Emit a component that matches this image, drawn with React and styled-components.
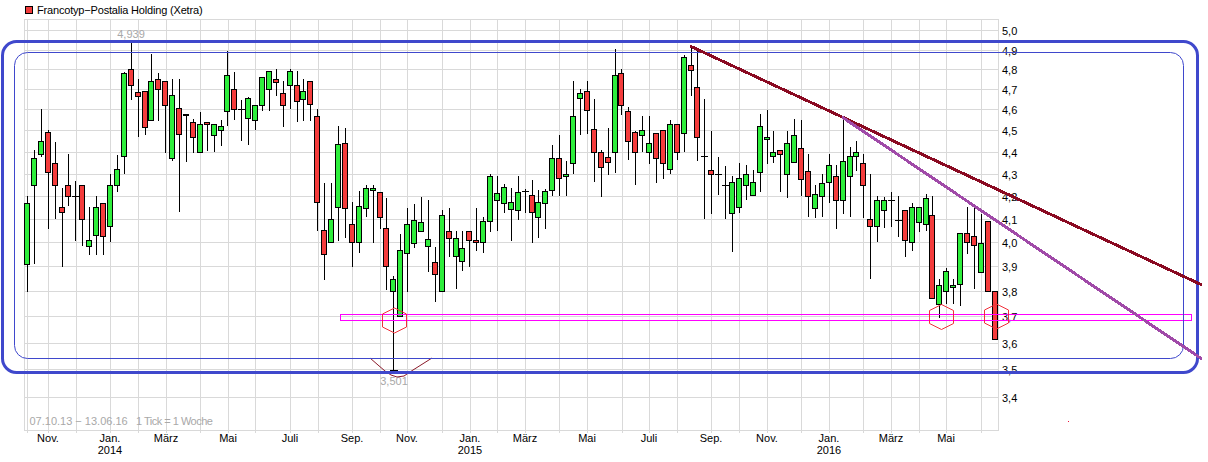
import styled, { createGlobalStyle } from 'styled-components';

const GlobalStyle = createGlobalStyle`
  html, body {
    margin: 0;
    padding: 0;
    background: #fff;
  }
`;

const Page = styled.div`
  width: 1208px;
  height: 462px;
  overflow: hidden;
  display: flex;
  flex-direction: column;
  font-family: "Liberation Sans", Arial, sans-serif;
`;

const Legend = styled.div`
  height: 18px;
  flex: none;
  display: flex;
  align-items: center;
  gap: 4px;
  padding: 1px 0 0 25px;
`;

const Swatch = styled.span`
  width: 6px;
  height: 6px;
  background: #f23c3c;
  border: 1px solid #000;
`;

const LegendLabel = styled.span`
  font-size: 11px;
  letter-spacing: -0.18px;
  color: #000;
`;

const ChartSvg = styled.svg`
  display: block;
  flex: none;
`;

const GridLine = styled.line`
  stroke: #d9d9d9;
  stroke-width: 1;
  shape-rendering: crispEdges;
`;

const Wick = styled.line`
  stroke: #000;
  stroke-width: 1;
  shape-rendering: crispEdges;
`;

const BodyEdge = styled.rect`
  fill: #000;
  shape-rendering: crispEdges;
`;

const BodyFill = styled.rect`
  fill: ${(props) => (props.$up ? '#2eee3c' : '#f43c3c')};
  shape-rendering: crispEdges;
`;

const AxisText = styled.text`
  font-family: "Liberation Sans", Arial, sans-serif;
  font-size: 11px;
  fill: #000;
  text-anchor: ${(props) => props.$anchor || 'start'};
`;

const NoteText = styled.text`
  font-family: "Liberation Sans", Arial, sans-serif;
  font-size: 11px;
  fill: #a8a8a8;
  letter-spacing: ${(props) => (props.$tight ? '-0.5px' : '0')};
  text-anchor: ${(props) => props.$anchor || 'start'};
`;

const Frame = styled.rect`
  fill: none;
  stroke: #3f48cc;
  stroke-width: ${(props) => props.$weight};
`;

const Channel = styled.rect`
  fill: none;
  stroke: #ff00ff;
  stroke-width: 1;
  shape-rendering: crispEdges;
`;

const Marker = styled.polygon`
  fill: none;
  stroke: #f0303a;
  stroke-width: 1;
`;

const Trend = styled.line`
  stroke: ${(props) => props.$color};
  stroke-width: 3;
  shape-rendering: crispEdges;
`;

const PRICE_LINES = [
  ['5,0', 30], ['4,9', 50], ['4,8', 69], ['4,7', 89], ['4,6', 109], ['4,5', 130],
  ['4,4', 152], ['4,3', 174], ['4,2', 196], ['4,1', 219], ['4,0', 242], ['3,9', 266],
  ['3,8', 291], ['3,7', 316], ['3,6', 343], ['3,5', 369], ['3,4', 397],
];

const WEEK_LINES = [
  76, 138, 200, 255, 318, 380, 442, 497, 559, 622, 677, 739, 801, 863, 919, 981,
];

const MONTHS = [
  ['Nov.', 48], ['Jan.', 110, '2014'], ['März', 166], ['Mai', 228], ['Juli', 290], ['Sep.', 352],
  ['Nov.', 407], ['Jan.', 470, '2015'], ['März', 525], ['Mai', 587], ['Juli', 649], ['Sep.', 711],
  ['Nov.', 767], ['Jan.', 829, '2016'], ['März', 891], ['Mai', 946],
];

// high, body top, body bottom, low, up
const CANDLES = [
  [196, 203, 264, 292, 1], [150, 158, 185, 264, 1], [109, 141, 154, 157, 1], [130, 132, 172, 229, 0],
  [142, 163, 185, 219, 0], [188, 207, 212, 267, 0], [154, 185, 196, 206, 0], [181, 196, 196, 241, 0],
  [185, 185, 219, 246, 0], [207, 240, 246, 255, 1], [196, 207, 235, 255, 1], [203, 203, 236, 255, 0],
  [174, 185, 226, 242, 1], [155, 169, 185, 192, 1], [72, 73, 156, 174, 1], [43, 69, 85, 100, 0],
  [79, 92, 96, 137, 0], [91, 91, 127, 135, 0], [54, 81, 120, 120, 1], [73, 79, 89, 121, 0],
  [81, 81, 105, 153, 0], [79, 95, 158, 161, 1], [79, 108, 134, 212, 0], [114, 114, 115, 162, 0],
  [119, 122, 137, 153, 0], [112, 124, 152, 153, 1], [122, 122, 124, 151, 0], [124, 124, 135, 152, 1],
  [120, 126, 130, 146, 1], [51, 75, 111, 126, 1], [72, 89, 109, 120, 0], [100, 109, 109, 141, 0],
  [97, 98, 118, 145, 1], [105, 105, 120, 130, 1], [77, 77, 105, 111, 1], [71, 71, 89, 111, 1],
  [69, 79, 82, 96, 0], [81, 93, 105, 127, 0], [69, 71, 85, 109, 1], [71, 85, 101, 122, 0],
  [79, 91, 99, 121, 1], [81, 81, 104, 121, 0], [109, 116, 202, 231, 0], [183, 230, 254, 280, 0],
  [183, 219, 242, 242, 1], [126, 144, 207, 241, 1], [128, 143, 208, 238, 0], [202, 224, 242, 267, 0],
  [191, 206, 242, 253, 1], [185, 188, 208, 217, 1], [185, 188, 190, 243, 1], [192, 192, 217, 229, 0],
  [198, 228, 266, 290, 0], [276, 279, 291, 370, 1], [234, 250, 316, 316, 1], [208, 224, 253, 292, 1],
  [204, 220, 243, 248, 1], [197, 222, 231, 231, 1], [200, 239, 246, 272, 1], [247, 262, 274, 302, 0],
  [210, 215, 291, 291, 1], [208, 231, 238, 257, 0], [231, 238, 256, 289, 1], [231, 248, 261, 271, 1],
  [231, 231, 240, 267, 0], [208, 240, 242, 251, 0], [217, 221, 242, 253, 1], [174, 176, 221, 232, 1],
  [176, 193, 200, 231, 1], [184, 187, 203, 213, 1], [188, 202, 209, 241, 1], [176, 192, 210, 220, 1],
  [189, 191, 191, 213, 1], [180, 195, 212, 243, 0], [190, 202, 217, 238, 1], [189, 191, 203, 229, 1],
  [145, 158, 190, 196, 1], [135, 158, 178, 196, 0], [161, 174, 176, 196, 1], [81, 116, 163, 174, 1],
  [89, 93, 98, 135, 1], [81, 91, 110, 134, 0], [99, 129, 152, 182, 0], [150, 152, 167, 197, 0],
  [128, 157, 162, 175, 0], [49, 75, 152, 173, 1], [69, 73, 105, 115, 0], [107, 111, 141, 160, 0],
  [131, 132, 152, 185, 0], [116, 130, 135, 152, 1], [116, 143, 152, 164, 1], [133, 133, 158, 183, 0],
  [130, 130, 163, 179, 0], [120, 124, 169, 174, 1], [124, 124, 152, 160, 0], [55, 57, 133, 152, 1],
  [45, 65, 70, 96, 0], [49, 87, 137, 161, 0], [99, 156, 156, 219, 0], [131, 170, 174, 214, 0],
  [157, 174, 174, 195, 0], [166, 185, 185, 219, 0], [176, 182, 213, 252, 1], [163, 178, 207, 213, 1],
  [165, 174, 185, 200, 1], [170, 182, 195, 195, 1], [114, 126, 172, 192, 1], [110, 137, 139, 164, 1],
  [131, 152, 156, 163, 1], [150, 150, 154, 192, 0], [131, 143, 174, 198, 1], [119, 135, 162, 162, 1],
  [120, 148, 179, 196, 0], [154, 171, 196, 217, 0], [185, 194, 208, 218, 1], [174, 183, 196, 217, 1],
  [154, 165, 182, 203, 1], [165, 176, 200, 229, 0], [117, 161, 200, 214, 1], [147, 156, 176, 217, 1],
  [141, 152, 156, 171, 1], [154, 163, 185, 218, 0], [174, 219, 226, 279, 0], [196, 200, 226, 242, 1],
  [197, 200, 210, 228, 1], [192, 200, 200, 227, 0], [196, 220, 220, 237, 0], [210, 210, 240, 257, 0],
  [203, 207, 242, 251, 1], [207, 207, 222, 232, 1], [194, 198, 224, 231, 1], [196, 215, 298, 298, 0],
  [279, 285, 304, 318, 1], [268, 271, 291, 304, 1], [279, 285, 287, 304, 1], [233, 233, 284, 306, 1],
  [207, 233, 242, 254, 0], [207, 236, 245, 289, 0], [214, 243, 272, 272, 1], [221, 221, 291, 291, 0],
  [291, 291, 339, 339, 0],
];

const hexagon = (left, top) =>
  [
    [left + 12, top],
    [left + 24, top + 6],
    [left + 24, top + 19],
    [left + 12, top + 25],
    [left, top + 19],
    [left, top + 6],
  ]
    .map((point) => point.join(','))
    .join(' ');

const Candle = ({ index, high, top, bottom, low, up }) => {
  const x = Math.floor(27.5 + 6.912 * index);
  const thick = bottom - top < 1;
  return (
    <g>
      <Wick x1={x + 0.5} x2={x + 0.5} y1={high} y2={low} />
      {thick ? (
        <BodyEdge x={x - 3} y={top} width={7} height={1} />
      ) : (
        <>
          <BodyEdge x={x - 3} y={top} width={6} height={bottom - top + 1} />
          <BodyFill x={x - 2} y={top + 1} width={4} height={bottom - top - 1} $up={up} />
        </>
      )}
    </g>
  );
};

const Chart = () => (
  <ChartSvg width="1208" height="443" viewBox="0 19 1208 443">
    {PRICE_LINES.map(([, y]) => (
      <GridLine key={y} x1="24" x2="999" y1={y + 0.5} y2={y + 0.5} />
    ))}
    <GridLine x1="24" x2="999" y1="19.5" y2="19.5" />
    <GridLine x1="24" x2="999" y1="430.5" y2="430.5" />
    <GridLine x1="24.5" x2="24.5" y1="19" y2="431" />
    <GridLine x1="998.5" x2="998.5" y1="19" y2="431" />
    <GridLine x1="27.5" x2="27.5" y1="19" y2="433" />
    {WEEK_LINES.map((x) => (
      <GridLine key={x} x1={x + 0.5} x2={x + 0.5} y1="19" y2="433" />
    ))}
    {MONTHS.map(([, x]) => (
      <GridLine key={x} x1={x + 0.5} x2={x + 0.5} y1="19" y2="433" />
    ))}

    {CANDLES.map(([high, top, bottom, low, up], index) => (
      <Candle key={index} index={index} high={high} top={top} bottom={bottom} low={low} up={up} />
    ))}
    <Wick x1="390" x2="398" y1="370.5" y2="370.5" />

    <NoteText x="131" y="38" $anchor="middle">4,939</NoteText>
    <NoteText x="394" y="385" $anchor="middle">3,501</NoteText>
    <NoteText x="29.5" y="424.5">07.10.13 − 13.06.16</NoteText>
    <NoteText x="136" y="424.5" $tight>1 Tick = 1 Woche</NoteText>

    {PRICE_LINES.map(([label, y]) => (
      <AxisText key={label} x="1002" y={y + 5}>{label}</AxisText>
    ))}
    {MONTHS.map(([label, x, year]) => (
      <g key={x}>
        <AxisText x={x} y="442" $anchor="middle">{label}</AxisText>
        {year && <AxisText x={x} y="454" $anchor="middle">{year}</AxisText>}
      </g>
    ))}

    <Channel x="340.5" y="314.5" width="851" height="6" />
    <Marker points={hexagon(382.5, 308)} />
    <Marker points={hexagon(929.5, 304.5)} />
    <Marker points={hexagon(984.5, 304)} />
    <polyline
      points="370,358 378,365 385,371 391,375 397,377 404,376 413,370 432,358"
      fill="none"
      stroke="#8b1a2a"
      strokeWidth="1"
    />
    <rect x="1068" y="421" width="1" height="1" fill="#f0103a" />

    <Frame x="14.5" y="52.5" width="1169" height="306" rx="13" $weight={1} />
    <Frame x="2.5" y="41.5" width="1195" height="331" rx="14" $weight={3} />

    <Trend x1="690" y1="46" x2="1202" y2="285" $color="#8a0a22" />
    <Trend x1="842" y1="117" x2="1202" y2="359" $color="#a04aa8" />
  </ChartSvg>
);

export default function App() {
  return (
    <Page>
      <GlobalStyle />
      <Legend>
        <Swatch />
        <LegendLabel>Francotyp−Postalia Holding (Xetra)</LegendLabel>
      </Legend>
      <Chart />
    </Page>
  );
}
